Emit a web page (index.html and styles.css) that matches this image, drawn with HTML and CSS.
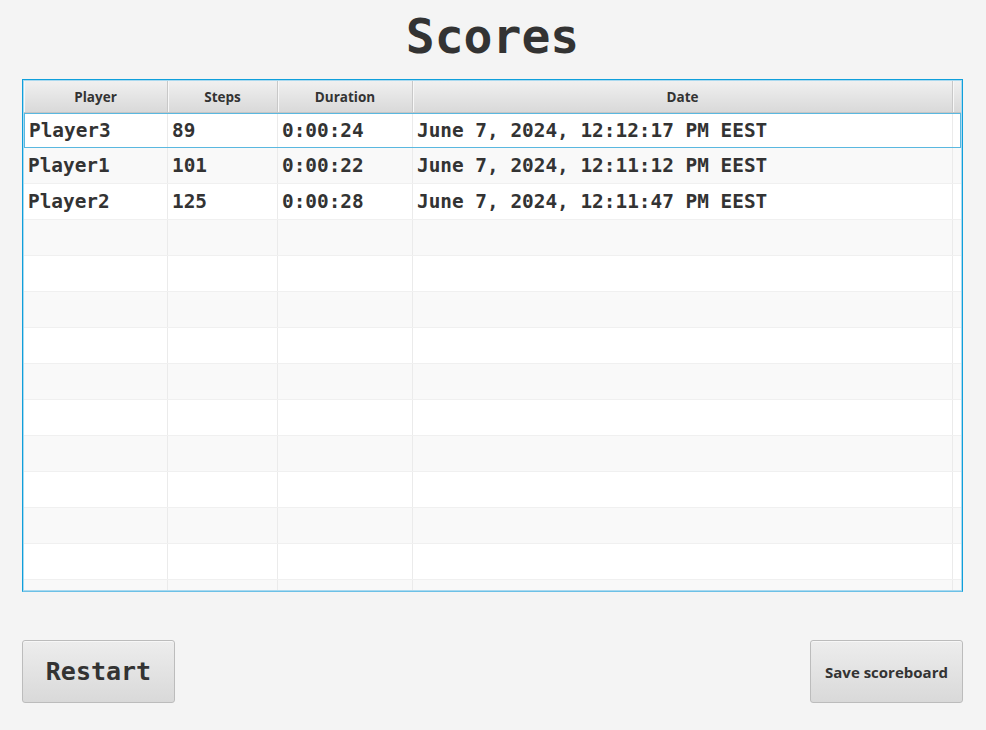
FILE: index.html
```html
<!DOCTYPE html>
<html>
<head>
<meta charset="utf-8">
<link rel="stylesheet" href="styles.css">
</head>
<body>
<div class="app">
  <h1 class="title">Scores</h1>
  <div class="table">
    <div class="thead">
      <div class="th">Player</div>
      <div class="th">Steps</div>
      <div class="th">Duration</div>
      <div class="th">Date</div>
      <div class="th filler"></div>
    </div>
    <div class="tbody">
      <div class="row focused"><div class="td">Player3</div><div class="td">89</div><div class="td">0:00:24</div><div class="td">June 7, 2024, 12:12:17 PM EEST</div><div class="td filler"></div></div>
      <div class="row odd"><div class="td">Player1</div><div class="td">101</div><div class="td">0:00:22</div><div class="td">June 7, 2024, 12:11:12 PM EEST</div><div class="td filler"></div></div>
      <div class="row"><div class="td">Player2</div><div class="td">125</div><div class="td">0:00:28</div><div class="td">June 7, 2024, 12:11:47 PM EEST</div><div class="td filler"></div></div>
      <div class="row odd"><div class="td"></div><div class="td"></div><div class="td"></div><div class="td"></div><div class="td filler"></div></div>
      <div class="row"><div class="td"></div><div class="td"></div><div class="td"></div><div class="td"></div><div class="td filler"></div></div>
      <div class="row odd"><div class="td"></div><div class="td"></div><div class="td"></div><div class="td"></div><div class="td filler"></div></div>
      <div class="row"><div class="td"></div><div class="td"></div><div class="td"></div><div class="td"></div><div class="td filler"></div></div>
      <div class="row odd"><div class="td"></div><div class="td"></div><div class="td"></div><div class="td"></div><div class="td filler"></div></div>
      <div class="row"><div class="td"></div><div class="td"></div><div class="td"></div><div class="td"></div><div class="td filler"></div></div>
      <div class="row odd"><div class="td"></div><div class="td"></div><div class="td"></div><div class="td"></div><div class="td filler"></div></div>
      <div class="row"><div class="td"></div><div class="td"></div><div class="td"></div><div class="td"></div><div class="td filler"></div></div>
      <div class="row odd"><div class="td"></div><div class="td"></div><div class="td"></div><div class="td"></div><div class="td filler"></div></div>
      <div class="row"><div class="td"></div><div class="td"></div><div class="td"></div><div class="td"></div><div class="td filler"></div></div>
      <div class="row odd"><div class="td"></div><div class="td"></div><div class="td"></div><div class="td"></div><div class="td filler"></div></div>
    </div>
  </div>
  <div class="actions">
    <button class="btn btn-mono">Restart</button>
    <button class="btn btn-sans">Save scoreboard</button>
  </div>
</div>
</body>
</html>
```

FILE: styles.css
```css
html, body {
  margin: 0;
  padding: 0;
  background: #f4f4f4;
}
.app {
  width: 986px;
  height: 730px;
  padding: 0 23px 0 22px;
  box-sizing: border-box;
  display: flex;
  flex-direction: column;
}
.title {
  margin: 0;
  height: 79px;
  line-height: 72px;
  text-align: center;
  font-family: "DejaVu Sans Mono", monospace;
  font-weight: bold;
  font-size: 48px;
  color: #333;
}
.table {
  height: 513px;
  box-sizing: border-box;
  border: 1px solid #0f9fdb;
  border-bottom-color: #6cc0e6;
  box-shadow: inset 0 0 0 1px #a9d9ef;
  padding: 1px;
  background: #fff;
  display: flex;
  flex-direction: column;
  overflow: hidden;
}
.thead, .row {
  display: grid;
  grid-template-columns: 144px 110px 135px 540px 8px;
}
.thead {
  height: 32px;
  flex: none;
  box-sizing: border-box;
  background: linear-gradient(#f0f0f0, #d9d9d9);
  border-bottom: 1px solid #c6c6c6;
}
.th {
  border-right: 1px solid #c8c8c8;
  box-shadow: inset 1px 0 0 #f7f7f7;
  display: flex;
  align-items: center;
  justify-content: center;
  font-family: "Open Sans", "Noto Sans", sans-serif;
  font-weight: bold;
  font-size: 13.5px;
  color: #333;
}
.th.filler {
  border-right: none;
}
.tbody {
  flex: 1;
  overflow: hidden;
}
.row {
  height: 36px;
  box-sizing: border-box;
  background: #fff;
  border-bottom: 1px solid #f0f0f0;
}
.row.odd {
  background: #f9f9f9;
}
.row.focused {
  border: 1px solid #5ab8e0;
  height: 35px;
  grid-template-columns: 143px 110px 135px 540px 7px;
}
.td {
  border-right: 1px solid #ebebeb;
  display: flex;
  align-items: center;
  padding-left: 4px;
  font-family: "DejaVu Sans Mono", monospace;
  font-weight: bold;
  font-size: 19.4px;
  color: #333;
  white-space: nowrap;
}
.td.filler {
  border-right: none;
}
.actions {
  margin-top: 48px;
  display: flex;
  justify-content: space-between;
}
.btn {
  width: 153px;
  height: 63px;
  box-sizing: border-box;
  border: 1px solid #bcbcbc;
  border-radius: 3px;
  background: linear-gradient(#ededed, #d9d9d9);
  box-shadow: inset 0 1px 0 #f7f7f7;
  color: #333;
  padding: 0;
  display: flex;
  align-items: center;
  justify-content: center;
}
.btn-mono {
  font-family: "DejaVu Sans Mono", monospace;
  font-weight: bold;
  font-size: 25px;
}
.btn-sans {
  font-family: "Open Sans", "Noto Sans", sans-serif;
  font-weight: bold;
  font-size: 15px;
}
```
